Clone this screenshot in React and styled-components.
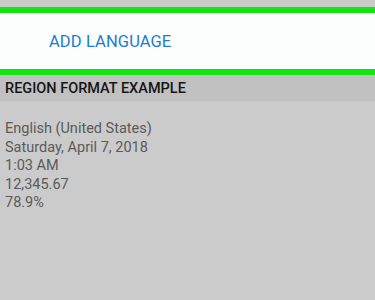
import React from 'react';
import styled, { createGlobalStyle } from 'styled-components';

const GlobalStyle = createGlobalStyle`
  html, body {
    margin: 0;
    padding: 0;
    background: #cbcbcb;
    font-family: Roboto, "Liberation Sans", sans-serif;
  }
`;

const Screen = styled.div`
  width: 375px;
  height: 300px;
  background: #cbcbcb;
  padding-top: 7px;
  box-sizing: border-box;
  overflow: hidden;
`;

const Highlight = styled.div`
  border-top: 6px solid #12e512;
  border-bottom: 6px solid #12e512;
  background: #fcfdfd;
  height: 56px;
  display: flex;
  align-items: center;
  padding-left: 49px;
`;

const ActionText = styled.span`
  color: #1c7ed0;
  font-size: 16.5px;
  letter-spacing: 0.1px;
`;

const SectionHeader = styled.div`
  background: #c1c1c1;
  height: 26px;
  display: flex;
  align-items: center;
  padding-left: 5px;
  font-size: 14.5px;
  font-weight: 500;
  color: #151515;
`;

const Details = styled.div`
  padding: 19px 5px 0;
  display: flex;
  flex-direction: column;
`;

const Line = styled.div`
  font-size: 14.5px;
  line-height: 18.5px;
  color: #5a5a5a;
`;

const lines = [
  'English (United States)',
  'Saturday, April 7, 2018',
  '1:03 AM',
  '12,345.67',
  '78.9%',
];

export default function App() {
  return (
    <>
      <GlobalStyle />
      <Screen>
        <Highlight>
          <ActionText>ADD LANGUAGE</ActionText>
        </Highlight>
        <SectionHeader>REGION FORMAT EXAMPLE</SectionHeader>
        <Details>
          {lines.map((l) => (
            <Line key={l}>{l}</Line>
          ))}
        </Details>
      </Screen>
    </>
  );
}
